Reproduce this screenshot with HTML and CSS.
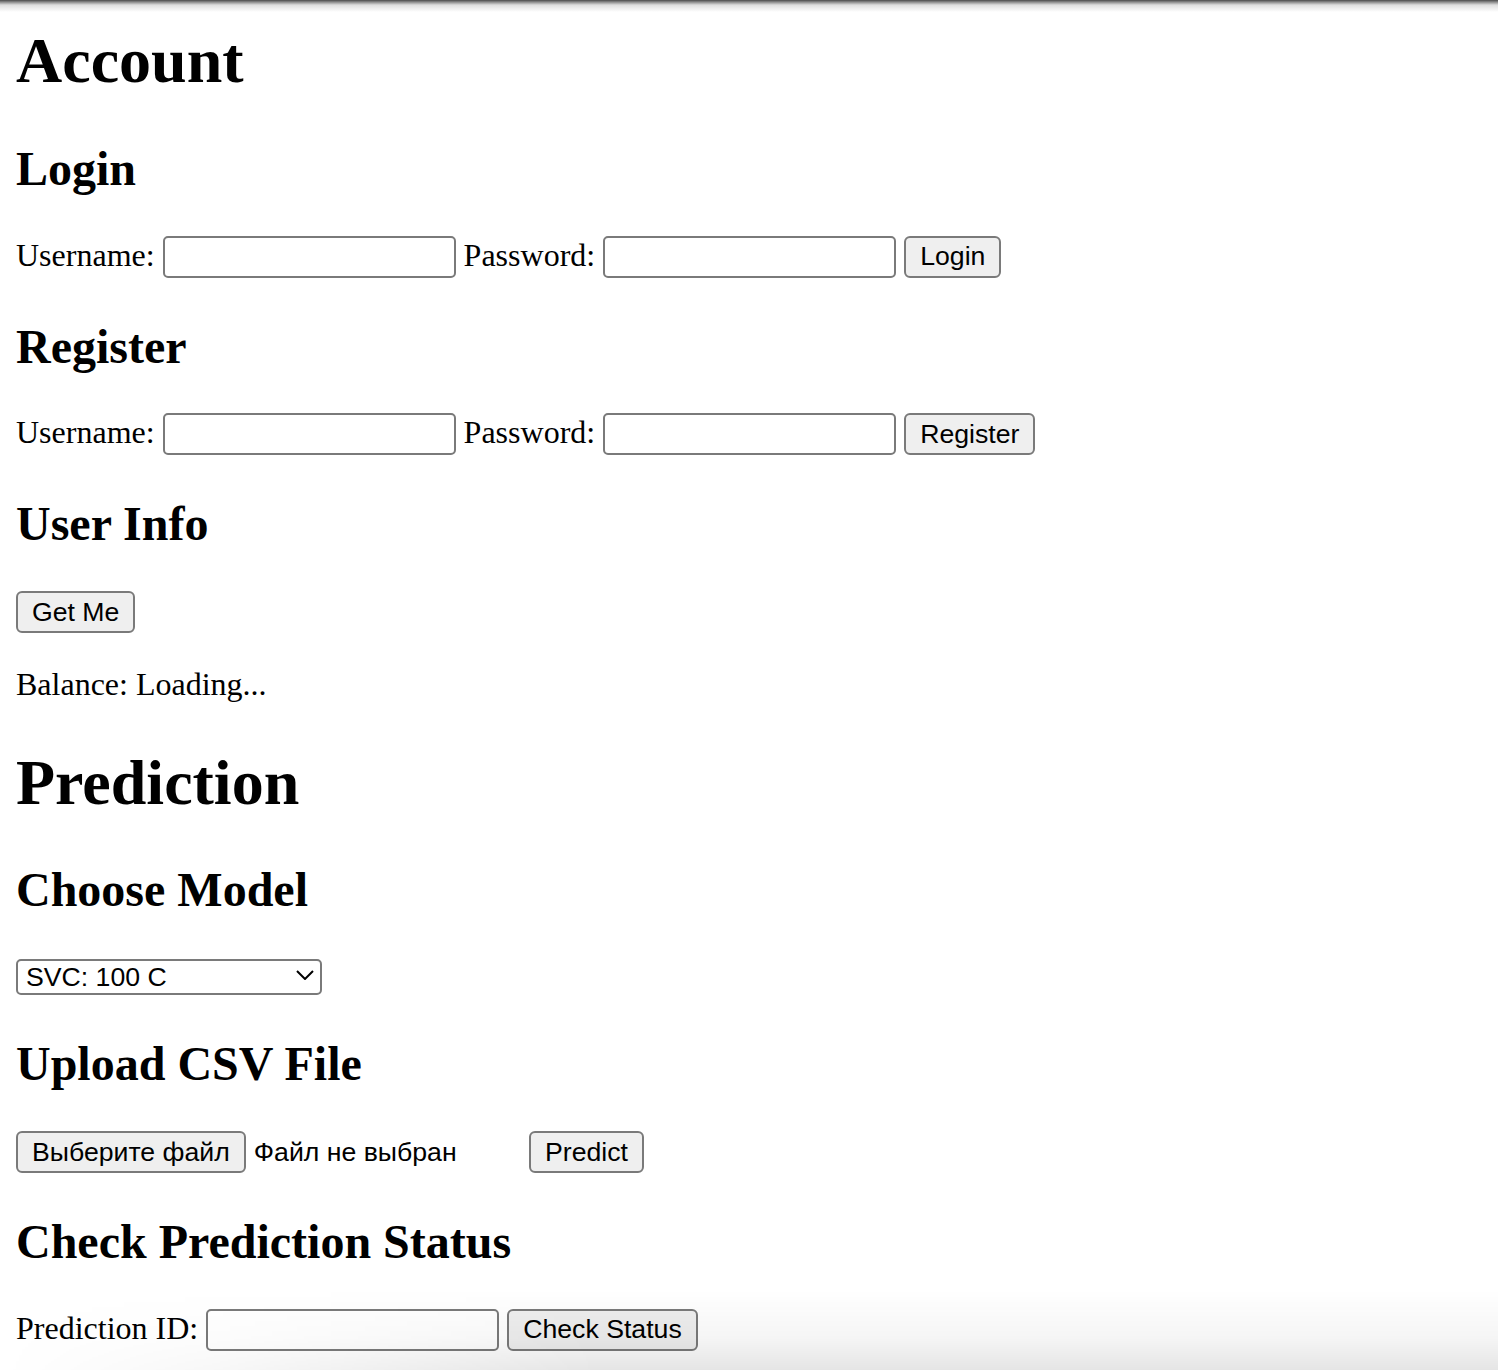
FILE: index.html
```html
<!DOCTYPE html>
<html lang="en">
<head>
<meta charset="utf-8">
<title>Account</title>
<link rel="stylesheet" href="styles.css">
</head>
<body>
<h1 class="title title-first">Account</h1>

<h2 class="section">Login</h2>
<div class="row">
<label class="lbl">Username:</label> <input class="field" type="text"> <label class="lbl">Password:</label> <input class="field" type="password"> <button class="btn" type="button">Login</button>
</div>

<h2 class="section">Register</h2>
<div class="row">
<label class="lbl">Username:</label> <input class="field" type="text"> <label class="lbl">Password:</label> <input class="field" type="password"> <button class="btn" type="button">Register</button>
</div>

<h2 class="section">User Info</h2>
<div class="row">
<button class="btn" type="button">Get Me</button>
</div>
<p class="balance">Balance: Loading...</p>

<h1 class="title title-prediction">Prediction</h1>

<h2 class="section">Choose Model</h2>
<div class="row row-select">
<span class="select-wrap"><select class="select"><option>SVC: 100 C</option></select><svg class="chevron" width="18" height="10" viewBox="0 0 18 10"><path d="M1 1 L9 9 L17 1" fill="none" stroke="#000" stroke-width="2"/></svg></span>
</div>

<h2 class="section">Upload CSV File</h2>
<div class="row">
<span class="file"><button class="btn file-btn" type="button">Выберите файл</button><span class="file-name">Файл не выбран</span></span> <button class="btn" type="button">Predict</button>
</div>

<h2 class="section">Check Prediction Status</h2>
<div class="row">
<label class="lbl">Prediction ID:</label> <input class="field" type="text"> <button class="btn" type="button">Check Status</button>
</div>

<div class="shade-top"></div>
<div class="shade-bottom"></div>
</body>
</html>
```

FILE: styles.css
```css
html {
  background: #fff;
}

body {
  margin: 0 16px 16px 16px;
  font-family: "Liberation Serif", "Times New Roman", serif;
  font-size: 32px;
  color: #000;
  background: #fff;
}

.title {
  font-size: 64px;
  font-weight: bold;
  margin: 42.88px 0;
}

.title-first {
  margin-top: 24px;
}

.title-prediction {
  margin-bottom: 41.88px;
}

.section {
  font-size: 48px;
  font-weight: bold;
  margin: 39.84px 0;
}

.row {
  margin: 0;
  padding-bottom: 1px;
}

.row-select {
  padding-bottom: 2px;
}

.balance {
  margin: 32px 0;
}

.field {
  box-sizing: border-box;
  width: 293px;
  height: 42px;
  margin: 0;
  padding: 2px 4px;
  border: 2px solid #7a7a7a;
  border-radius: 5px;
  background: #fff;
  font-family: "Liberation Sans", Arial, sans-serif;
  font-size: 26.67px;
  outline: none;
}

.btn {
  box-sizing: border-box;
  height: 42px;
  margin: 0;
  padding: 2px 14px;
  border: 2px solid #7a7a7a;
  border-radius: 6px;
  background: #efefef;
  color: #000;
  font-family: "Liberation Sans", Arial, sans-serif;
  font-size: 26.67px;
}

.select-wrap {
  position: relative;
  display: inline-block;
}

.select {
  box-sizing: border-box;
  width: 306px;
  height: 36px;
  margin: 0;
  padding: 0 40px 0 8px;
  border: 2px solid #7a7a7a;
  border-radius: 5px;
  background: #fff;
  color: #000;
  font-family: "Liberation Sans", Arial, sans-serif;
  font-size: 26.67px;
  -webkit-appearance: none;
  appearance: none;
  outline: none;
}

.chevron {
  position: absolute;
  right: 8px;
  top: 13px;
  pointer-events: none;
}

.file {
  display: inline-flex;
  align-items: baseline;
  width: 505px;
}

.file-btn {
  margin-right: 8px;
}

.file-name {
  font-family: "Liberation Sans", Arial, sans-serif;
  font-size: 26.67px;
  white-space: nowrap;
}

.shade-top {
  position: fixed;
  left: 0;
  right: 0;
  top: 0;
  height: 12px;
  background: linear-gradient(to bottom, #4a4a4a 0, #8a8a8a 2px, rgba(200, 200, 200, 0.6) 5px, rgba(255, 255, 255, 0) 12px);
  pointer-events: none;
}

.shade-bottom {
  position: fixed;
  left: 0;
  right: 0;
  bottom: 0;
  height: 80px;
  background: linear-gradient(to bottom, rgba(0, 0, 0, 0) 0, rgba(0, 0, 0, 0.04) 60%, rgba(0, 0, 0, 0.1) 100%);
  -webkit-mask-image: linear-gradient(to right, rgba(0, 0, 0, 0) 0, rgba(0, 0, 0, 0.3) 15%, #000 40%);
  mask-image: linear-gradient(to right, rgba(0, 0, 0, 0) 0, rgba(0, 0, 0, 0.3) 15%, #000 40%);
  pointer-events: none;
}
```
